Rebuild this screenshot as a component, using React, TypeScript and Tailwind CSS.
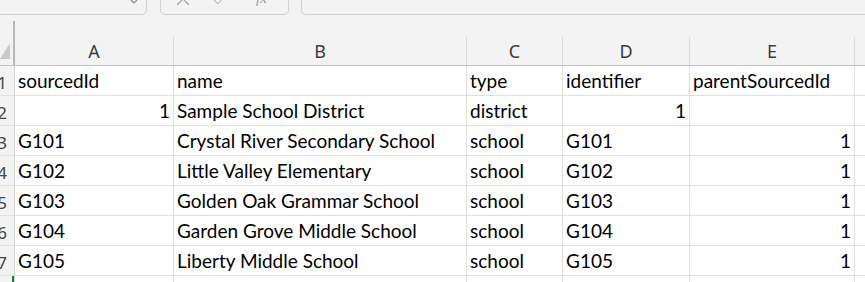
import { X, Check } from "lucide-react";

type Row = {
  n: number;
  cells: { text: string; right?: boolean }[];
};

const columns = [
  { label: "A", w: "w-[159px]" },
  { label: "B", w: "w-[293px]" },
  { label: "C", w: "w-[96px]" },
  { label: "D", w: "w-[127px]" },
  { label: "E", w: "w-[165px]" },
];

const rows: Row[] = [
  {
    n: 1,
    cells: [
      { text: "sourcedId" },
      { text: "name" },
      { text: "type" },
      { text: "identifier" },
      { text: "parentSourcedId" },
    ],
  },
  {
    n: 2,
    cells: [
      { text: "1", right: true },
      { text: "Sample School District" },
      { text: "district" },
      { text: "1", right: true },
      { text: "" },
    ],
  },
  ...[
    ["G101", "Crystal River Secondary School"],
    ["G102", "Little Valley Elementary"],
    ["G103", "Golden Oak Grammar School"],
    ["G104", "Garden Grove Middle School"],
    ["G105", "Liberty Middle School"],
  ].map(([id, name], i) => ({
    n: i + 3,
    cells: [
      { text: id },
      { text: name },
      { text: "school" },
      { text: id },
      { text: "1", right: true },
    ],
  })),
];

const Toolbar = () => (
  <div className="h-[15px] flex overflow-hidden">
    <div className="-ml-[20px] w-[167px] h-[40px] -mt-[25px] border border-[#d2d2d2] rounded-[5px] flex items-end justify-end pr-[8px] pb-[10px] shrink-0">
      <svg width="8" height="5" viewBox="0 0 8 5">
        <path d="M1 1l3 3 3-3" stroke="#8a8a8a" strokeWidth="1.2" fill="none" />
      </svg>
    </div>
    <div className="ml-[13px] w-[129px] h-[40px] -mt-[25px] border border-[#d2d2d2] rounded-[5px] flex items-end pb-[4px] pl-[11px] gap-[17px] text-[#9b9b9b] shrink-0">
      <X size={22} strokeWidth={1.2} />
      <Check size={18} strokeWidth={1.2} className="mb-[1px]" />
      <span className="italic text-[15px] leading-none font-['Liberation_Serif',serif] ml-[10px] mb-[4px]">
        fx
      </span>
    </div>
    <div className="ml-[12px] flex-1 h-[40px] -mt-[25px] border border-r-0 border-[#d2d2d2] rounded-l-[5px]" />
  </div>
);

const Header = () => (
  <div className="mt-[6px] flex h-[45px] border-b border-[#c4c4c4]">
    <div className="w-[15px] shrink-0 relative">
      <div className="absolute right-[0px] top-0 bottom-0 w-[2px] bg-[#b7b7b7]" />
      <svg
        className="absolute left-0 top-[22px]"
        width="10"
        height="16"
        viewBox="0 0 10 16"
      >
        <path d="M10 0V16H0Z" fill="#c9c9c9" />
      </svg>
    </div>
    {columns.map((c) => (
      <div key={c.label} className={`${c.w} shrink-0 flex flex-col`}>
        <div className="h-[17px]" />
        <div className="flex-1 border-r border-[#dadada] flex items-center justify-center text-[#3b3b3b] text-[18px] font-['Noto_Sans',sans-serif] pt-[1px]">
          {c.label}
        </div>
      </div>
    ))}
    <div className="flex-1" />
  </div>
);

export default function App() {
  return (
    <div className="w-[865px] h-[282px] overflow-hidden bg-[#f3f3f3] font-['Lato',sans-serif]">
      <Toolbar />
      <Header />
      <div className="bg-white">
        {[...rows, { n: 8, cells: [] as Row["cells"] }].map((r) => (
          <div key={r.n} className="flex h-[30px] border-b border-[#e0e0e0]">
            <div className="w-[15px] shrink-0 bg-[#f3f3f3] border-r border-[#d4d4d4] overflow-hidden flex items-end justify-end pr-[7px] pb-[4px] text-[17px] leading-none text-[#444] font-['Noto_Sans',sans-serif] relative">
              {r.n}
              {r.n === 8 && (
                <div className="absolute right-[0px] top-0 bottom-0 w-[2px] bg-[#107c41]" />
              )}
            </div>
            {columns.map((c, i) => {
              const cell = r.cells[i];
              return (
                <div
                  key={c.label}
                  className={`${c.w} shrink-0 border-r border-[#e0e0e0] flex items-end px-[3px] pb-[5px] text-[19px] leading-none text-black whitespace-nowrap ${
                    cell?.right ? "justify-end" : "justify-start"
                  }`}
                >
                  {cell?.text}
                </div>
              );
            })}
            <div className="flex-1" />
          </div>
        ))}
      </div>
    </div>
  );
}
